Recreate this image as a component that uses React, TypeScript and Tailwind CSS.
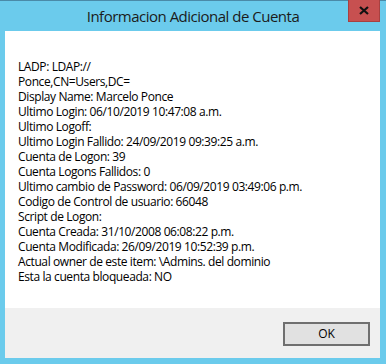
import React from "react";

const lines = [
  "LADP: LDAP://",
  "Ponce,CN=Users,DC=",
  "Display Name: Marcelo Ponce",
  "Ultimo Login: 06/10/2019 10:47:08 a.m.",
  "Ultimo Logoff:",
  "Ultimo Login Fallido: 24/09/2019 09:39:25 a.m.",
  "Cuenta de Logon: 39",
  "Cuenta Logons Fallidos: 0",
  "Ultimo cambio de Password: 06/09/2019 03:49:06 p.m.",
  "Codigo de Control de usuario: 66048",
  "Script de Logon:",
  "Cuenta Creada: 31/10/2008 06:08:22 p.m.",
  "Cuenta Modificada: 26/09/2019 10:52:39 p.m.",
  "Actual owner de este item: \\Admins. del dominio",
  "Esta la cuenta bloqueada: NO",
];

export default function App() {
  return (
    <div
      className="w-[386px] h-[364px] bg-[#6bcbec] border-t border-[#4a8aa8] flex flex-col px-[5px] pb-[6px]"
      style={{ fontFamily: '"Open Sans", "Noto Sans", sans-serif' }}
    >
      <div className="relative h-[30px] flex items-center justify-center">
        <span className="text-[15px] text-[#1b1b1b] tracking-[-0.5px]">Informacion Adicional de Cuenta</span>
        <div className="absolute right-[1px] top-[-1px] w-[32px] h-[22px] bg-[#c75050] border border-[#a84040] border-t-0 flex items-center justify-center">
          <svg width="10" height="9" viewBox="0 0 10 9">
            <path d="M1 1 L9 8 M9 1 L1 8" stroke="#111" strokeWidth="2.2" />
          </svg>
        </div>
      </div>
      <div className="flex-1 flex flex-col w-[375px]">
        <div className="bg-white h-[277px] pl-[13px] pt-[28px]">
          {lines.map((l, i) => (
            <div key={i} className="text-[12px] leading-[15px] text-black tracking-[-0.4px] whitespace-nowrap">
              {l}
            </div>
          ))}
        </div>
        <div className="flex-1 bg-[#f0f0f0] flex justify-end items-start pt-[14px] pr-[10px]">
          <button className="w-[87px] h-[24px] bg-[#e1e1e1] border-2 border-[#6f6f6f] text-[12px] text-black">
            OK
          </button>
        </div>
      </div>
    </div>
  );
}
